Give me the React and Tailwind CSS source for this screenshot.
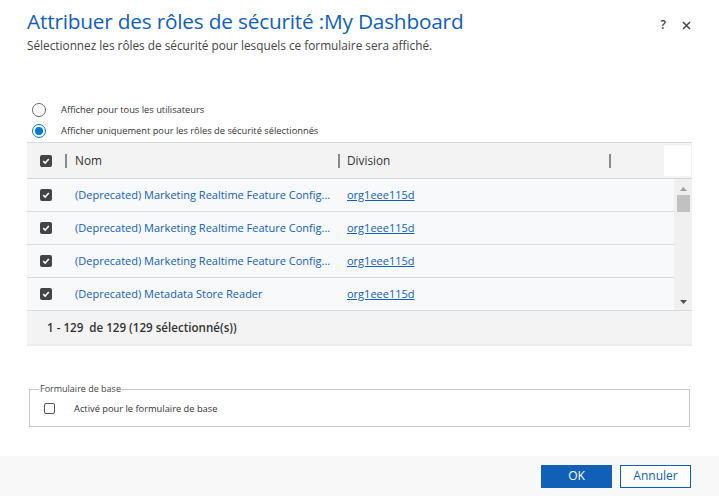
import React from "react";

const ROWS = [
  { name: "(Deprecated) Marketing Realtime Feature Config...", div: "org1eee115d" },
  { name: "(Deprecated) Marketing Realtime Feature Config...", div: "org1eee115d" },
  { name: "(Deprecated) Marketing Realtime Feature Config...", div: "org1eee115d" },
  { name: "(Deprecated) Metadata Store Reader", div: "org1eee115d" },
];

function Check({ on }) {
  if (!on) {
    return <span className="block w-[11px] h-[11px] rounded-[2px] border border-[#555] bg-white" />;
  }
  return (
    <span className="flex items-center justify-center w-[12px] h-[12px] rounded-[2px] bg-[#444]">
      <svg width="8" height="8" viewBox="0 0 8 8">
        <path d="M1.2 4.2 L3.2 6 L6.8 2" fill="none" stroke="#fff" strokeWidth="1.6" />
      </svg>
    </span>
  );
}

function Radio({ on }) {
  return (
    <span className={`flex items-center justify-center w-[14px] h-[14px] rounded-full border ${on ? "border-[#0078d4]" : "border-[#666]"} bg-white`}>
      {on && <span className="w-[8px] h-[8px] rounded-full bg-[#0078d4]" />}
    </span>
  );
}

function Sep() {
  return <span className="w-[2px] h-[14px] bg-[#8a8a8a]" />;
}

export default function App() {
  return (
    <div className="w-[719px] h-[496px] bg-white flex flex-col text-[#333]" style={{ fontFamily: '"Segoe UI", "Open Sans", "Noto Sans", sans-serif' }}>
      <div className="flex items-start justify-between pl-[27px] pr-[28px] pt-[6px]">
        <div>
          <h1 className="text-[20.8px] leading-[30px] text-[#1160b7] tracking-[-0.2px]">Attribuer des rôles de sécurité :My Dashboard</h1>
          <p className="text-[11.8px] leading-[16px] text-[#444] mt-[1px]">Sélectionnez les rôles de sécurité pour lesquels ce formulaire sera affiché.</p>
        </div>
        <div className="flex items-center gap-[16px] pt-[10px] text-[#444]">
          <span className="text-[12px] font-semibold">?</span>
          <svg width="9" height="9" viewBox="0 0 9 9">
            <path d="M1 1 L8 8 M8 1 L1 8" stroke="#444" strokeWidth="1.5" />
          </svg>
        </div>
      </div>

      <div className="mt-[50px] pl-[32px] flex flex-col gap-[7px] text-[9.3px]">
        <div className="flex items-center gap-[15px]">
          <Radio />
          <span>Afficher pour tous les utilisateurs</span>
        </div>
        <div className="flex items-center gap-[15px]">
          <Radio on />
          <span>Afficher uniquement pour les rôles de sécurité sélectionnés</span>
        </div>
      </div>

      <div className="mx-[27px] mt-[4px] w-[665px] border-t border-[#dcdcdc] bg-[#f3f3f3]">
        <div className="flex h-[36px] items-center border-b border-[#d6d6d6]">
          <div className="w-[38px] pl-[13px]"><Check on /></div>
          <Sep />
          <span className="w-[271px] pl-[8px] text-[11.8px] text-[#333]">Nom</span>
          <Sep />
          <span className="w-[269px] pl-[7px] text-[11.8px] text-[#333]">Division</span>
          <Sep />
          <div className="ml-auto mr-[1px] w-[27px] h-[30px] bg-white" />
        </div>
        <div className="flex">
          <div className="flex-1">
            {ROWS.map((r, i) => (
              <div key={i} className="flex h-[33px] items-center border-b border-[#dcdcdc] bg-[#f8f9fb] text-[11px]">
                <div className="w-[48px] pl-[13px]"><Check on /></div>
                <span className="w-[272px] text-[#1160b7] whitespace-nowrap">{r.name}</span>
                <span className="text-[#1160b7] underline">{r.div}</span>
              </div>
            ))}
          </div>
          <div className="w-[18px] bg-[#f0f0f0] border-b border-[#dcdcdc] flex flex-col items-center pt-[8px] pb-[6px]">
            <svg width="7" height="4" viewBox="0 0 7 4"><path d="M0 4 L3.5 0 L7 4Z" fill="#a0a0a0" /></svg>
            <div className="mt-[4px] w-[13px] h-[17px] bg-[#c1c1c1]" />
            <div className="flex-1" />
            <svg width="7" height="4" viewBox="0 0 7 4"><path d="M0 0 L3.5 4 L7 0Z" fill="#505050" /></svg>
          </div>
        </div>
        <div className="h-[35px] flex items-center pl-[20px] text-[11.6px] font-semibold text-[#333] border-b-2 border-[#ececec]">
          1 - 129&nbsp; de 129 (129 sélectionné(s))
        </div>
      </div>

      <fieldset className="mx-[29px] mt-[38px] w-[661px] h-[43px] border border-[#c8c8c8] px-[9px] pb-[6px]">
        <legend className="text-[9px] px-[1px] text-[#444] leading-[10px]">Formulaire de base</legend>
        <div className="flex items-center gap-[19px] pl-[5px] pt-[8px] text-[9.3px]">
          <Check />
          <span>Activé pour le formulaire de base</span>
        </div>
      </fieldset>

      <div className="mt-auto h-[40px] bg-[#f8f8f8] flex items-center justify-end gap-[8px] pr-[28px]">
        <button className="w-[71px] h-[23px] bg-[#1160b7] border border-[#0f5fb5] text-white text-[12px]">OK</button>
        <button className="w-[71px] h-[23px] bg-white border border-[#1160b7] text-[#1160b7] text-[12px]">Annuler</button>
      </div>
    </div>
  );
}
